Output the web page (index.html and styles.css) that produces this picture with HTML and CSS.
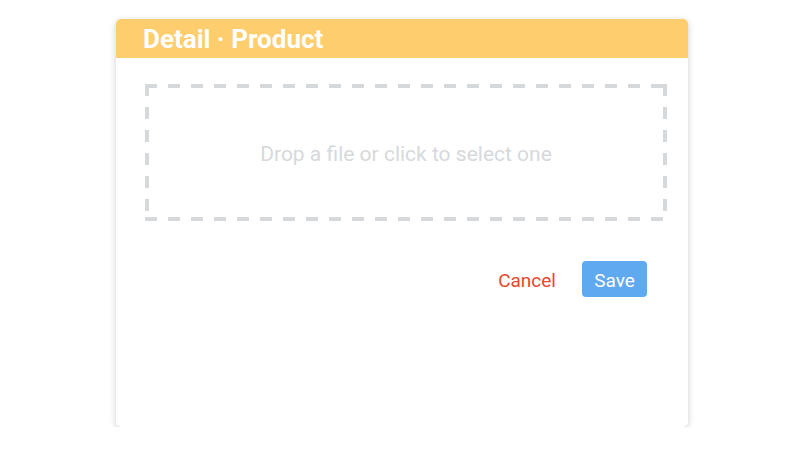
FILE: index.html
```html
<!DOCTYPE html>
<html>
<head>
<meta charset="utf-8">
<link rel="stylesheet" href="styles.css">
</head>
<body>
<div class="card">
  <div class="card-header">Detail · Product</div>
  <div class="card-body">
    <div class="dropzone">Drop a file or click to select one</div>
    <div class="actions">
      <button class="btn btn-cancel">Cancel</button>
      <button class="btn btn-save">Save</button>
    </div>
  </div>
</div>
</body>
</html>
```
FILE: styles.css
```css
html, body {
  margin: 0;
  padding: 0;
  background: #ffffff;
  font-family: Roboto, "Liberation Sans", sans-serif;
}
body {
  padding-top: 19px;
}
.card {
  margin-left: 116px;
  width: 572px;
  height: 408px;
  background: #ffffff;
  border-radius: 5px;
  box-shadow: 0 2px 7px rgba(0, 0, 0, 0.2);
  overflow: hidden;
  box-sizing: border-box;
}
.card-header {
  height: 39px;
  background: #fdcd6e;
  color: #ffffff;
  font-weight: 700;
  font-size: 26px;
  line-height: 41px;
  padding-left: 27px;
}
.card-body {
  padding: 26px 21px 0 29px;
}
.dropzone {
  box-sizing: border-box;
  height: 137px;
  padding-top: 2px;
  display: flex;
  align-items: center;
  justify-content: center;
  color: #d6d9dc;
  font-size: 21px;
  background:
    repeating-linear-gradient(90deg, #d6d9db 0 12px, transparent 12px 23px) left top / 100% 4px no-repeat,
    repeating-linear-gradient(90deg, #d6d9db 0 12px, transparent 12px 23px) left bottom / 100% 4px no-repeat,
    repeating-linear-gradient(180deg, #d6d9db 0 12px, transparent 12px 23px) left top / 4px 100% no-repeat,
    repeating-linear-gradient(180deg, #d6d9db 0 12px, transparent 12px 23px) right top / 4px 100% no-repeat;
}
.actions {
  display: flex;
  justify-content: flex-end;
  align-items: center;
  gap: 26px;
  margin-top: 40px;
  padding-right: 20px;
}
.btn {
  font-family: Roboto, "Liberation Sans", sans-serif;
  font-size: 19px;
  border: none;
  background: none;
  padding: 2px 0 0;
  cursor: pointer;
}
.btn-cancel {
  color: #e5482e;
  margin-left: 2px;
}
.btn-save {
  background: #5ea9ef;
  color: #ffffff;
  width: 65px;
  height: 36px;
  border-radius: 4px;
}
```
